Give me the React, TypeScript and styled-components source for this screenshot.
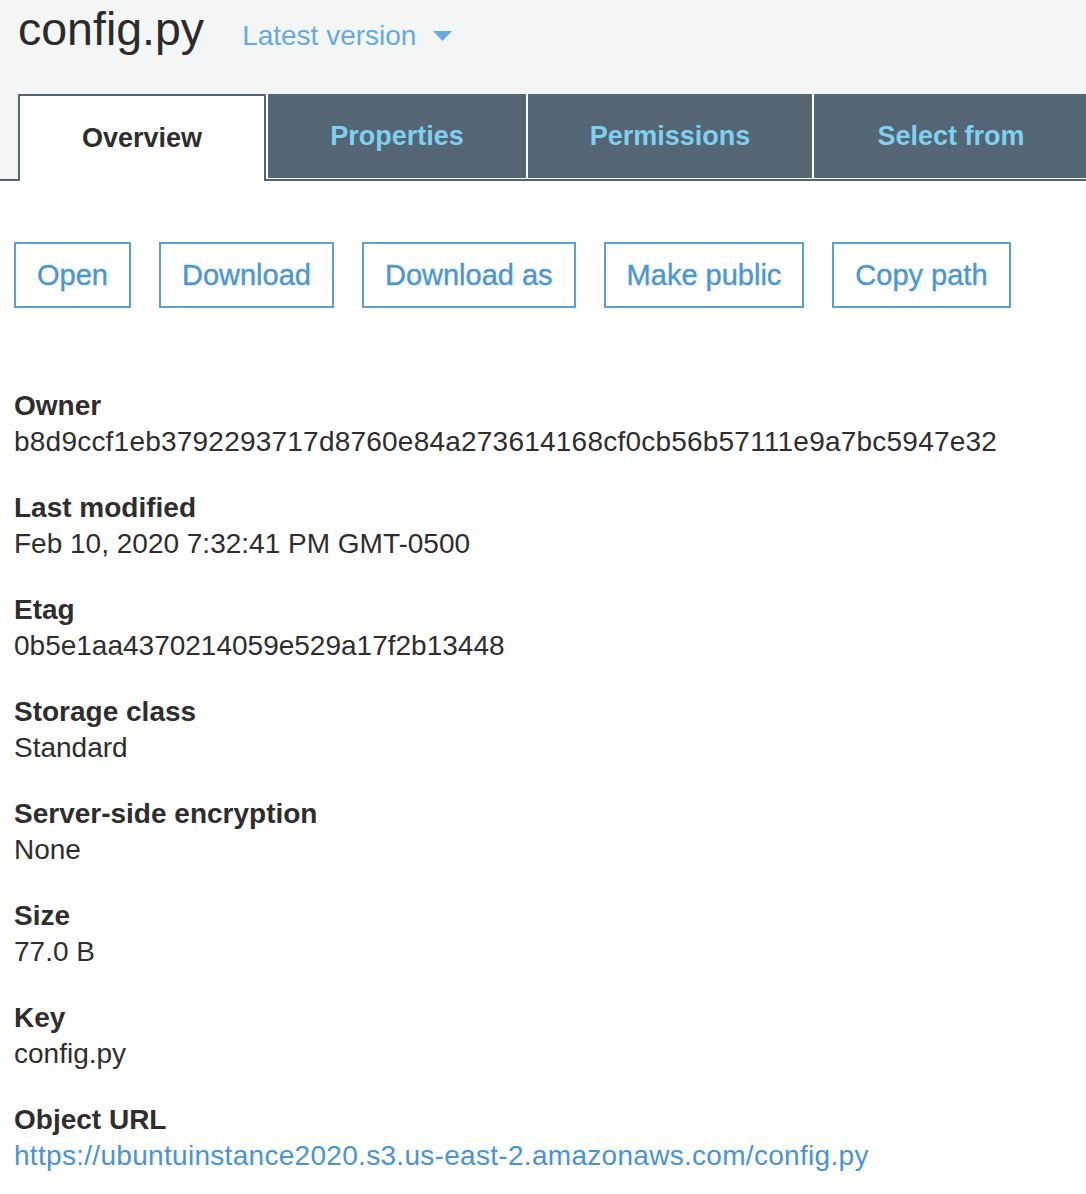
import React from "react";
import styled, { createGlobalStyle } from "styled-components";

const GlobalStyle = createGlobalStyle`
  html, body {
    margin: 0;
    padding: 0;
    background: #ffffff;
    overflow-x: hidden;
  }
  body {
    font-family: "Liberation Sans", Arial, Helvetica, sans-serif;
    color: #333333;
  }
  * { box-sizing: border-box; }
`;

const Page = styled.div`
  width: 1086px;
  overflow: hidden;
`;

const Header = styled.header`
  background: #f4f6f6;
`;

const TitleRow = styled.div`
  display: flex;
  align-items: baseline;
  padding: 4px 0 0 18px;
  height: 94px;
`;

const Title = styled.h1`
  margin: 0;
  font-size: 46.5px;
  line-height: 50px;
  font-weight: 400;
  color: #2b2b2b;
`;

const VersionPicker = styled.button`
  display: flex;
  align-items: center;
  gap: 17px;
  margin-left: 38px;
  border: none;
  background: none;
  padding: 0;
  font-family: inherit;
  font-size: 28px;
  color: #66aadf;
  cursor: pointer;
`;

const TabBar = styled.nav`
  display: flex;
  align-items: flex-start;
  padding-left: 18px;
  border-bottom: 2px solid #546572;
`;

const ActiveTab = styled.div<{ $w: number }>`
  flex: 0 0 ${(p) => p.$w}px;
  height: 87px;
  margin-bottom: -2px;
  background: #ffffff;
  border: 2px solid #546572;
  border-bottom: none;
  display: flex;
  align-items: center;
  justify-content: center;
  font-size: 27px;
  font-weight: 700;
  color: #2e2e2e;
  padding-bottom: 1px;
`;

const TabGroup = styled.div`
  flex: 1;
  display: flex;
  gap: 2px;
  padding: 0 0 1px 2px;
  background: #ffffff;
  overflow: hidden;
`;

const Tab = styled.div<{ $w: number }>`
  flex: 0 0 ${(p) => p.$w}px;
  height: 84px;
  background: #546573;
  display: flex;
  align-items: center;
  justify-content: center;
  font-size: 27px;
  font-weight: 700;
  color: #7fd0f1;
`;

const Content = styled.main`
  padding: 61px 14px 0 14px;
`;

const Actions = styled.div`
  display: flex;
  gap: 28px;
  margin-bottom: 80px;
`;

const ActionButton = styled.button`
  height: 66px;
  padding: 0 21px;
  background: #ffffff;
  border: 2px solid #5a9fd5;
  border-radius: 0;
  font-family: inherit;
  font-size: 29px;
  -webkit-text-stroke: 0.4px currentColor;
  color: #4b97d2;
  cursor: pointer;
`;

const Details = styled.dl`
  margin: 0;
  display: flex;
  flex-direction: column;
  gap: 30px;
`;

const Field = styled.div`
  display: flex;
  flex-direction: column;
`;

const Label = styled.dt`
  font-size: 28px;
  line-height: 36px;
  font-weight: 700;
  color: #2e2e2e;
`;

const Value = styled.dd<{ $spacing?: number }>`
  margin: 0;
  font-size: 28px;
  line-height: 36px;
  color: #2e2e2e;
  letter-spacing: ${(p) => p.$spacing ?? 0}px;
`;

const Link = styled.a`
  color: #4a94d3;
  text-decoration: none;
`;

const fields: { label: string; value: string; link?: boolean; spacing?: number }[] = [
  {
    label: "Owner",
    value: "b8d9ccf1eb3792293717d8760e84a273614168cf0cb56b57111e9a7bc5947e32",
    spacing: 0.22,
  },
  { label: "Last modified", value: "Feb 10, 2020 7:32:41 PM GMT-0500" },
  { label: "Etag", value: "0b5e1aa4370214059e529a17f2b13448" },
  { label: "Storage class", value: "Standard" },
  { label: "Server-side encryption", value: "None" },
  { label: "Size", value: "77.0 B" },
  { label: "Key", value: "config.py" },
  {
    label: "Object URL",
    value: "https://ubuntuinstance2020.s3.us-east-2.amazonaws.com/config.py",
    link: true,
    spacing: 0.3,
  },
];

const tabs = [
  { label: "Properties", w: 258 },
  { label: "Permissions", w: 284 },
  { label: "Select from", w: 274 },
];

const actions = ["Open", "Download", "Download as", "Make public", "Copy path"];

export default function App() {
  return (
    <Page>
      <GlobalStyle />
      <Header>
        <TitleRow>
          <Title>config.py</Title>
          <VersionPicker>
            Latest version
            <svg width="19" height="10" viewBox="0 0 19 10" aria-hidden="true">
              <path d="M0 0 H19 L9.5 10 Z" fill="#66aadf" />
            </svg>
          </VersionPicker>
        </TitleRow>
        <TabBar>
          <ActiveTab $w={248}>Overview</ActiveTab>
          <TabGroup>
            {tabs.map((t) => (
              <Tab key={t.label} $w={t.w}>
                {t.label}
              </Tab>
            ))}
          </TabGroup>
        </TabBar>
      </Header>
      <Content>
        <Actions>
          {actions.map((a) => (
            <ActionButton key={a}>{a}</ActionButton>
          ))}
        </Actions>
        <Details>
          {fields.map((f) => (
            <Field key={f.label}>
              <Label>{f.label}</Label>
              <Value $spacing={f.spacing}>
                {f.link ? <Link href={f.value}>{f.value}</Link> : f.value}
              </Value>
            </Field>
          ))}
        </Details>
      </Content>
    </Page>
  );
}
